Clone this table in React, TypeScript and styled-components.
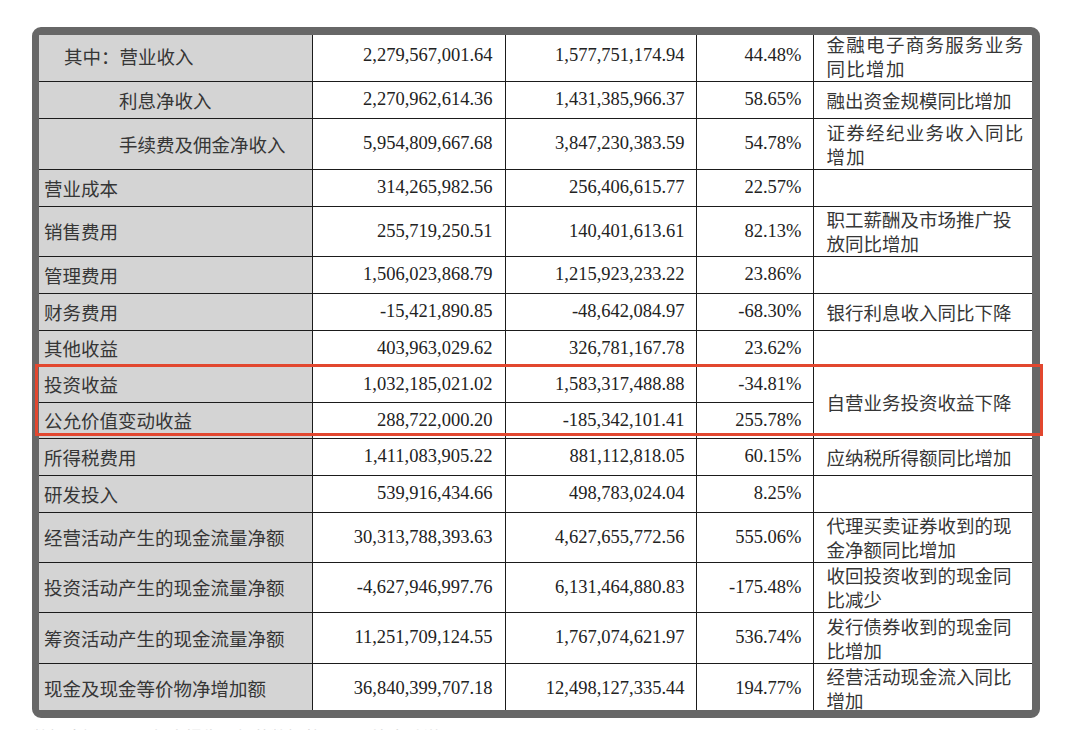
import styled, { createGlobalStyle } from "styled-components";

const GlobalStyle = createGlobalStyle`
  html, body {
    margin: 0;
    padding: 0;
    background: #ffffff;
    overflow: hidden;
  }
  body {
    font-family: "Noto Sans CJK SC", "Liberation Serif", serif;
  }
`;

const Page = styled.div`
  position: relative;
  width: 1080px;
  height: 730px;
  padding: 27px 0 0 32px;
  box-sizing: border-box;
`;

const Frame = styled.div`
  width: 1008px;
  height: 691px;
  box-sizing: border-box;
  border: 8px solid #676767;
  border-left-width: 7px;
  border-radius: 9px;
  overflow: hidden;
  background: #ffffff;
`;

const Table = styled.table`
  border-collapse: collapse;
  table-layout: fixed;
  width: 993px;
  margin-top: -4px;
`;

const Row = styled.tr<{ $h: number }>`
  height: ${(p) => p.$h}px;
`;

const LabelCell = styled.td<{ $indent: number }>`
  background: #d4d4d4;
  color: #363636;
  font-size: 18.5px;
  line-height: 24px;
  padding: 0 0 0 ${(p) => [5, 25, 80][p.$indent]}px;
  border-right: 1.5px solid #1b1b1b;
  border-bottom: 1.5px solid #1b1b1b;
  white-space: nowrap;
  vertical-align: middle;
`;

const NumCell = styled.td<{ $pr: number }>`
  font-family: "Liberation Serif", "Noto Sans CJK SC", serif;
  font-size: 18.5px;
  color: #222222;
  text-align: right;
  padding: 0 ${(p) => p.$pr}px 0 0;
  border-right: 1.5px solid #1b1b1b;
  border-bottom: 1.5px solid #1b1b1b;
  white-space: nowrap;
  vertical-align: middle;
`;

const NoteCell = styled.td`
  color: #363636;
  font-size: 18.5px;
  line-height: 24px;
  padding: 0 0 0 13px;
  border-bottom: 1.5px solid #1b1b1b;
  vertical-align: middle;
`;

const NoteLine = styled.div<{ $spread?: boolean }>`
  white-space: nowrap;
  letter-spacing: ${(p) => (p.$spread ? "1.3px" : "0")};
`;

const Highlight = styled.div`
  position: absolute;
  left: 35px;
  top: 364px;
  width: 1008px;
  height: 72px;
  box-sizing: border-box;
  border: 3px solid #e2472f;
  pointer-events: none;
`;

const Caption = styled.div`
  height: 12px;
  overflow: hidden;
  padding: 8px 0 0 0;
  box-sizing: border-box;
  font-size: 17px;
  line-height: 22px;
  color: #d6d6d6;
  white-space: nowrap;
`;

interface Item {
  label: string;
  indent: number;
  cur: string;
  prev: string;
  change: string;
  note: string[] | null;
  span?: number;
  spread?: boolean;
  h: number;
}

const rows: Item[] = [
  { label: "其中：营业收入", indent: 1, cur: "2,279,567,001.64", prev: "1,577,751,174.94", change: "44.48%", note: ["金融电子商务服务业务", "同比增加"], spread: true, h: 50 },
  { label: "利息净收入", indent: 2, cur: "2,270,962,614.36", prev: "1,431,385,966.37", change: "58.65%", note: ["融出资金规模同比增加"], h: 37 },
  { label: "手续费及佣金净收入", indent: 2, cur: "5,954,809,667.68", prev: "3,847,230,383.59", change: "54.78%", note: ["证券经纪业务收入同比", "增加"], spread: true, h: 51 },
  { label: "营业成本", indent: 0, cur: "314,265,982.56", prev: "256,406,615.77", change: "22.57%", note: [], h: 37 },
  { label: "销售费用", indent: 0, cur: "255,719,250.51", prev: "140,401,613.61", change: "82.13%", note: ["职工薪酬及市场推广投", "放同比增加"], h: 50 },
  { label: "管理费用", indent: 0, cur: "1,506,023,868.79", prev: "1,215,923,233.22", change: "23.86%", note: [], h: 37 },
  { label: "财务费用", indent: 0, cur: "-15,421,890.85", prev: "-48,642,084.97", change: "-68.30%", note: ["银行利息收入同比下降"], h: 37 },
  { label: "其他收益", indent: 0, cur: "403,963,029.62", prev: "326,781,167.78", change: "23.62%", note: [], h: 36 },
  { label: "投资收益", indent: 0, cur: "1,032,185,021.02", prev: "1,583,317,488.88", change: "-34.81%", note: ["自营业务投资收益下降"], span: 2, h: 36 },
  { label: "公允价值变动收益", indent: 0, cur: "288,722,000.20", prev: "-185,342,101.41", change: "255.78%", note: null, h: 36 },
  { label: "所得税费用", indent: 0, cur: "1,411,083,905.22", prev: "881,112,818.05", change: "60.15%", note: ["应纳税所得额同比增加"], h: 37 },
  { label: "研发投入", indent: 0, cur: "539,916,434.66", prev: "498,783,024.04", change: "8.25%", note: [], h: 37 },
  { label: "经营活动产生的现金流量净额", indent: 0, cur: "30,313,788,393.63", prev: "4,627,655,772.56", change: "555.06%", note: ["代理买卖证券收到的现", "金净额同比增加"], h: 50 },
  { label: "投资活动产生的现金流量净额", indent: 0, cur: "-4,627,946,997.76", prev: "6,131,464,880.83", change: "-175.48%", note: ["收回投资收到的现金同", "比减少"], h: 50 },
  { label: "筹资活动产生的现金流量净额", indent: 0, cur: "11,251,709,124.55", prev: "1,767,074,621.97", change: "536.74%", note: ["发行债券收到的现金同", "比增加"], h: 51 },
  { label: "现金及现金等价物净增加额", indent: 0, cur: "36,840,399,707.18", prev: "12,498,127,335.44", change: "194.77%", note: ["经营活动现金流入同比", "增加"], h: 50 },
];

export default function App() {
  return (
    <>
      <GlobalStyle />
      <Page>
        <Frame>
          <Table>
            <colgroup>
              <col style={{ width: 273 }} />
              <col style={{ width: 193 }} />
              <col style={{ width: 191 }} />
              <col style={{ width: 117 }} />
              <col style={{ width: 219 }} />
            </colgroup>
            <tbody>
              {rows.map((r) => (
                <Row key={r.label} $h={r.h}>
                  <LabelCell $indent={r.indent}>{r.label}</LabelCell>
                  <NumCell $pr={12}>{r.cur}</NumCell>
                  <NumCell $pr={11}>{r.prev}</NumCell>
                  <NumCell $pr={11}>{r.change}</NumCell>
                  {r.note && (
                    <NoteCell rowSpan={r.span ?? 1}>
                      {r.note.map((line) => (
                        <NoteLine key={line} $spread={r.spread}>
                          {line}
                        </NoteLine>
                      ))}
                    </NoteCell>
                  )}
                </Row>
              ))}
            </tbody>
          </Table>
        </Frame>
        <Caption>数据来源：公司年度报告，经营数据整理及同比变动说明</Caption>
        <Highlight />
      </Page>
    </>
  );
}
